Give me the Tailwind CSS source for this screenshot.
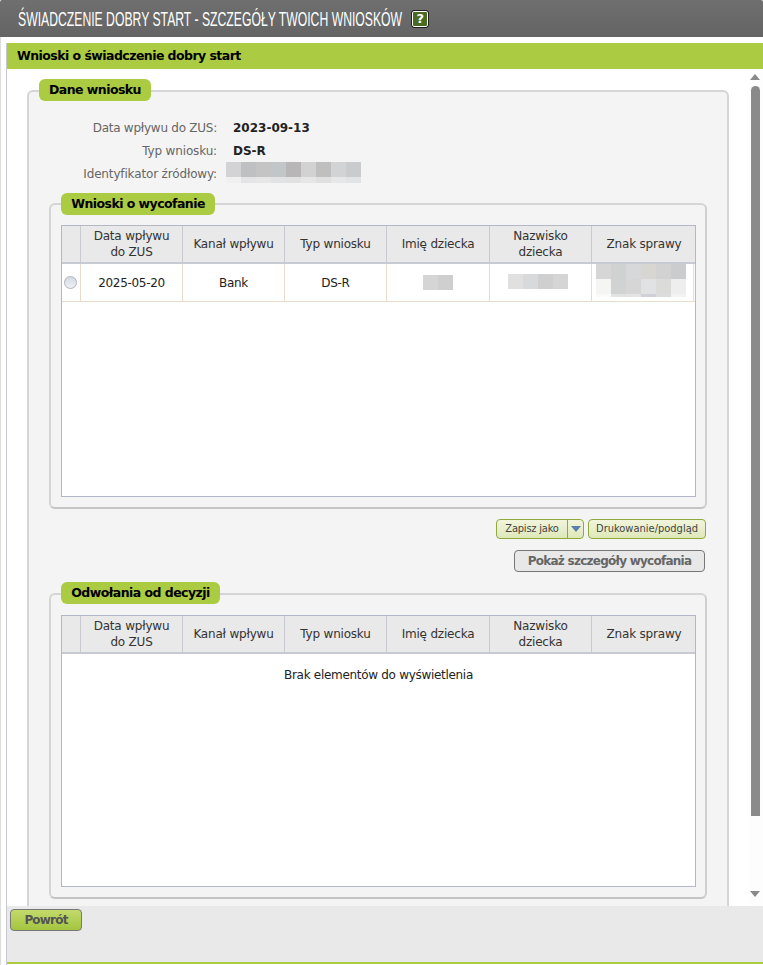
<!DOCTYPE html>
<html lang="pl">
<head>
<meta charset="utf-8">
<script src="https://cdn.jsdelivr.net/npm/@tailwindcss/browser@4"></script>
<title>Szczegóły wniosków</title>
</head>
<body class="bg-white font-['DejaVu_Sans',sans-serif] text-[12px] tracking-[-0.3px] text-[#222] overflow-hidden">
<div class="w-[763px] h-[965px] flex flex-col overflow-hidden">
  <header class="h-[37px] shrink-0 bg-gradient-to-b from-[#6e6f6e] to-[#636463] flex items-center pl-[18px] gap-[10px] rounded-t-[2px]">
    <h1 class="w-[384px] origin-left scale-x-[0.61] font-['Liberation_Sans',sans-serif] text-[20px] tracking-normal text-white whitespace-nowrap leading-none">ŚWIADCZENIE DOBRY START - SZCZEGÓŁY TWOICH WNIOSKÓW</h1>
    <span class="w-[16px] h-[16px] rounded-[2px] bg-[#4a6a22] border border-white outline outline-1 outline-black/70 text-white font-bold text-[13px] leading-none flex items-center justify-center">?</span>
  </header>
  <div class="flex-1 min-h-0 flex border-l border-[#dcdcdc] pt-[6px] pl-[5px]">
  <main class="flex-1 min-w-0 flex flex-col border-l border-[#c6c9d2]">
    <div class="h-[26px] shrink-0 bg-[#abcb43] flex items-center pl-[10px] font-bold text-[12.5px] tracking-[-0.55px] text-black">Wnioski o świadczenie dobry start</div>
    <div class="flex-1 min-h-0 flex overflow-hidden bg-white">
      <div class="w-[744px] pl-[20px] pt-[21px] overflow-hidden">
        <div class="relative w-[702px] h-[1000px] bg-[#f4f4f4] border-2 border-[#d5d5d5] rounded-[6px] px-[20px] pt-[24px]">
          <span class="absolute left-[10px] top-[-13px] w-[112px] h-[22px] rounded-[6px] bg-[#abcb43] flex items-center justify-center font-bold text-[12.5px] tracking-[-0.55px] text-black">Dane wniosku</span>
          <div class="grid grid-cols-[168px_1fr] gap-x-[16px] text-[#666] h-[69px]">
            <div class="h-[23px] flex items-center justify-end tracking-[-0.25px]">Data wpływu do ZUS:</div>
            <div class="h-[23px] flex items-center font-bold text-[#222] tracking-normal">2023-09-13</div>
            <div class="h-[23px] flex items-center justify-end tracking-[-0.15px]">Typ wniosku:</div>
            <div class="h-[23px] flex items-center font-bold text-[#222] tracking-normal">DS-R</div>
            <div class="h-[23px] flex items-center justify-end tracking-[-0.15px]">Identyfikator źródłowy:</div>
            <div class="h-[21px] w-[135px] ml-[-7px] flex flex-col">
              <div class="flex h-[15px]">
                <i class="w-[15px] bg-[#d3d3d5]"></i><i class="w-[15px] bg-[#bfc0c2]"></i><i class="w-[15px] bg-[#c5c4c5]"></i><i class="w-[15px] bg-[#c3c6c8]"></i><i class="w-[15px] bg-[#b9b6b7]"></i><i class="w-[15px] bg-[#d2d2d3]"></i><i class="w-[15px] bg-[#c0bfc0]"></i><i class="w-[15px] bg-[#d1d3d5]"></i><i class="w-[15px] bg-[#c9cbcd]"></i>
              </div>
              <div class="flex h-[6px]">
                <i class="w-[15px] bg-[#f0f0f0]"></i><i class="w-[15px] bg-[#e4e4e6]"></i><i class="w-[15px] bg-[#e6e6e7]"></i><i class="w-[15px] bg-[#e0e2e4]"></i><i class="w-[15px] bg-[#e1e1e2]"></i><i class="w-[15px] bg-[#e6e6e7]"></i><i class="w-[15px] bg-[#e0e0e1]"></i><i class="w-[15px] bg-[#e6e7e8]"></i><i class="w-[15px] bg-[#e2e3e4]"></i>
              </div>
            </div>
          </div>

          <section class="relative mt-[18px] w-[658px] h-[306px] border-2 border-[#d5d5d5] border-r-[#cfcfcf] border-b-[#c4c4c4] rounded-[6px] bg-[#f4f4f4] px-[10px] pt-[20px]">
            <span class="absolute left-[10px] top-[-12px] w-[154px] h-[22px] rounded-[6px] bg-[#abcb43] flex items-center justify-center font-bold text-[12.5px] tracking-[-0.55px] text-black">Wnioski o wycofanie</span>
            <div class="w-[635px] h-[272px] border border-[#b4b8c6] bg-white">
              <div class="grid grid-cols-[19px_102px_102px_102px_103px_102px_104px] h-[38px] bg-[#e9e9e9] border-b-2 border-[#c8cad1] text-center leading-[16px] text-[#333] tracking-[-0.2px]">
                <div class="border-r border-[#c9cad0]"></div>
                <div class="border-r border-[#c9cad0] flex items-center justify-center">Data wpływu<br>do ZUS</div>
                <div class="border-r border-[#c9cad0] flex items-center justify-center">Kanał wpływu</div>
                <div class="border-r border-[#c9cad0] flex items-center justify-center">Typ wniosku</div>
                <div class="border-r border-[#c9cad0] flex items-center justify-center">Imię dziecka</div>
                <div class="border-r border-[#c9cad0] flex items-center justify-center">Nazwisko<br>dziecka</div>
                <div class="flex items-center justify-center">Znak sprawy</div>
              </div>
              <div class="grid grid-cols-[19px_102px_102px_102px_103px_102px_102px] h-[38px] border-b border-[#e8dccb] text-center">
                <div class="border-r border-[#e8dccb] flex items-center justify-center"><span class="w-[13px] h-[13px] ml-[-1px] rounded-full border border-[#aeb4c0] bg-gradient-to-b from-[#d5dbe3] to-[#eef0f3]"></span></div>
                <div class="border-r border-[#e8dccb] flex items-center justify-center">2025-05-20</div>
                <div class="border-r border-[#e8dccb] flex items-center justify-center">Bank</div>
                <div class="border-r border-[#e8dccb] flex items-center justify-center">DS-R</div>
                <div class="border-r border-[#e8dccb] flex items-center justify-center"><span class="w-[30px] h-[15px] flex"><i class="w-[15px] bg-[#d6d5d6]"></i><i class="w-[15px] bg-[#cfcfd0]"></i></span></div>
                <div class="border-r border-[#e8dccb] flex items-center justify-center"><span class="w-[60px] h-[15px] flex mt-[-3px] ml-[-6px]"><i class="w-[15px] bg-[#e1e0e1]"></i><i class="w-[15px] bg-[#d8d9da]"></i><i class="w-[15px] bg-[#cfcfcf]"></i><i class="w-[15px] bg-[#d5d5d5]"></i></span></div>
                <div class="border-r border-[#e8dccb] pl-[4px]">
                  <div class="w-[90px] flex flex-wrap">
                    <i class="w-[15px] h-[15px] bg-[#d6d6d6]"></i><i class="w-[15px] h-[15px] bg-[#d0d1d1]"></i><i class="w-[15px] h-[15px] bg-[#d6d8d9]"></i><i class="w-[15px] h-[15px] bg-[#d8d6d3]"></i><i class="w-[15px] h-[15px] bg-[#d2d2d2]"></i><i class="w-[15px] h-[15px] bg-[#cbcccd]"></i>
                    <i class="w-[15px] h-[15px] bg-[#f5f5f4]"></i><i class="w-[15px] h-[15px] bg-[#d1d3d2]"></i><i class="w-[15px] h-[15px] bg-[#d6d6d6]"></i><i class="w-[15px] h-[15px] bg-[#e1e2e4]"></i><i class="w-[15px] h-[15px] bg-[#dbdbd9]"></i><i class="w-[15px] h-[15px] bg-[#eeeeee]"></i>
                    <i class="w-[15px] h-[3px] bg-[#fafafa]"></i><i class="w-[15px] h-[3px] bg-[#e2e2e2]"></i><i class="w-[15px] h-[3px] bg-[#e4e4e4]"></i><i class="w-[15px] h-[3px] bg-[#d0d0d8]"></i><i class="w-[15px] h-[3px] bg-[#dcdcdc]"></i><i class="w-[15px] h-[3px] bg-[#f2f2f2]"></i>
                  </div>
                </div>
              </div>
            </div>
          </section>

          <div class="w-[657px] h-[84px] pt-[10px] flex flex-col items-end">
            <div class="flex gap-[4px] tracking-normal text-[#444]">
              <div class="w-[88px] h-[20px] rounded-[4px] border border-[#90a93c] bg-gradient-to-b from-[#f1f5dd] to-[#dfe8b9] flex items-stretch">
                <span class="flex-1 flex items-center justify-center font-['DejaVu_Sans_Condensed','DejaVu_Sans',sans-serif] text-[11px] tracking-[-0.2px]">Zapisz jako</span>
                <span class="w-[16px] border-l border-[#90a93c] flex items-center justify-center">
                  <svg width="10" height="6" viewBox="0 0 10 6"><path d="M0 0h10L5 6z" fill="#5a7fa8"/></svg>
                </span>
              </div>
              <div class="w-[118px] h-[20px] rounded-[4px] border border-[#90a93c] bg-gradient-to-b from-[#f1f5dd] to-[#dfe8b9] flex items-center justify-center font-['DejaVu_Sans_Condensed','DejaVu_Sans',sans-serif] text-[11px]">Drukowanie/podgląd</div>
            </div>
            <div class="mt-[11px] mr-[1px] w-[191px] h-[22px] rounded-[4px] border border-[#777] bg-[#e8e8e8] flex items-center justify-center font-bold text-[12px] tracking-[-0.75px] text-[#666]">Pokaż szczegóły wycofania</div>
          </div>

          <section class="relative w-[658px] h-[306px] border-2 border-[#d5d5d5] border-r-[#cfcfcf] border-b-[#c4c4c4] rounded-[6px] bg-[#f4f4f4] px-[10px] pt-[20px]">
            <span class="absolute left-[10px] top-[-13px] w-[159px] h-[22px] rounded-[6px] bg-[#abcb43] flex items-center justify-center font-bold text-[12.5px] tracking-[-0.55px] text-black">Odwołania od decyzji</span>
            <div class="w-[635px] h-[272px] border border-[#b4b8c6] bg-white">
              <div class="grid grid-cols-[19px_102px_102px_102px_103px_102px_104px] h-[38px] bg-[#e9e9e9] border-b-2 border-[#c8cad1] text-center leading-[16px] text-[#333] tracking-[-0.2px]">
                <div class="border-r border-[#c9cad0]"></div>
                <div class="border-r border-[#c9cad0] flex items-center justify-center">Data wpływu<br>do ZUS</div>
                <div class="border-r border-[#c9cad0] flex items-center justify-center">Kanał wpływu</div>
                <div class="border-r border-[#c9cad0] flex items-center justify-center">Typ wniosku</div>
                <div class="border-r border-[#c9cad0] flex items-center justify-center">Imię dziecka</div>
                <div class="border-r border-[#c9cad0] flex items-center justify-center">Nazwisko<br>dziecka</div>
                <div class="flex items-center justify-center">Znak sprawy</div>
              </div>
              <div class="text-center pt-[13px] leading-[16px]">Brak elementów do wyświetlenia</div>
            </div>
          </section>
        </div>
      </div>
      <div class="flex-1 flex flex-col items-center pr-[3px] bg-[#fdfdfd]">
        <svg class="mt-[5px] shrink-0" width="10" height="6" viewBox="0 0 10 6"><path d="M5 0l5 6H0z" fill="#8a8a8a"/></svg>
        <div class="mt-[6px] w-[9px] h-[730px] shrink-0 rounded-t-[5px] bg-[#8a8a8a]"></div>
        <svg class="mt-[75px] shrink-0" width="10" height="6" viewBox="0 0 10 6"><path d="M0 0h10L5 6z" fill="#8a8a8a"/></svg>
      </div>
    </div>
    <footer class="h-[58px] shrink-0 bg-[#e9e9e9] border-b-2 border-[#abcb43] pl-[3px] pt-[3px] mb-[1px]">
      <div class="w-[72px] h-[22px] rounded-[4px] border border-[#777] bg-gradient-to-b from-[#c3da6b] to-[#a3c53e] flex items-center justify-center font-bold text-[12px] tracking-[-0.8px] text-[#555]">Powrót</div>
    </footer>
  </main>
  </div>
</div>
</body>
</html>
